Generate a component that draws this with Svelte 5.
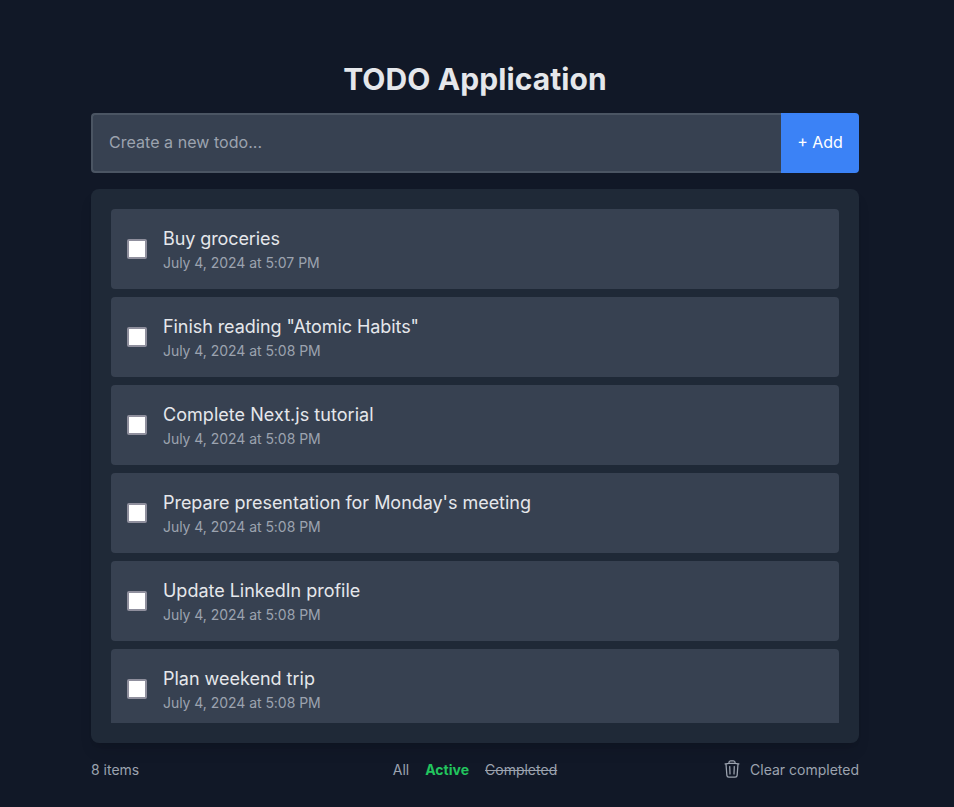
<script>
  const todos = [
    { title: 'Buy groceries', date: 'July 4, 2024 at 5:07 PM', tracking: -0.1 },
    { title: 'Finish reading "Atomic Habits"', date: 'July 4, 2024 at 5:08 PM', tracking: -0.07 },
    { title: 'Complete Next.js tutorial', date: 'July 4, 2024 at 5:08 PM', tracking: 0.04 },
    { title: "Prepare presentation for Monday's meeting", date: 'July 4, 2024 at 5:08 PM', tracking: -0.035 },
    { title: 'Update LinkedIn profile', date: 'July 4, 2024 at 5:08 PM', tracking: -0.02 },
    { title: 'Plan weekend trip', date: 'July 4, 2024 at 5:08 PM', tracking: -0.01 }
  ];
</script>

<main>
  <div class="app">
    <h1>TODO Application</h1>
    <form class="create">
      <input type="text" placeholder="Create a new todo..." />
      <button type="button" class="add">+ Add</button>
    </form>
    <section class="panel">
      <ul>
        {#each todos as { title, date, tracking }}
          <li>
            <input type="checkbox" aria-label={title} />
            <div class="body">
              <span class="title" style="letter-spacing: {tracking}px">{title}</span>
              <span class="date">{date}</span>
            </div>
          </li>
        {/each}
      </ul>
    </section>
    <footer>
      <span class="count">8 items</span>
      <nav>
        <button type="button">All</button>
        <button type="button" class="active">Active</button>
        <button type="button" class="done">Completed</button>
      </nav>
      <button type="button" class="clear">
        <svg width="20" height="20" viewBox="0 0 24 24" fill="none" stroke="currentColor" stroke-width="1.5" stroke-linecap="round" stroke-linejoin="round">
          <path d="m14.74 9-.346 9m-4.788 0L9.26 9m9.968-3.21c.342.052.682.107 1.022.166m-1.022-.165L18.16 19.673a2.25 2.25 0 0 1-2.244 2.077H8.084a2.25 2.25 0 0 1-2.244-2.077L4.772 5.79m14.456 0a48.108 48.108 0 0 0-3.478-.397m-12 .562c.34-.059.68-.114 1.022-.165m0 0a48.11 48.11 0 0 1 3.478-.397m7.5 0v-.916c0-1.18-.91-2.164-2.09-2.201a51.964 51.964 0 0 0-3.32 0c-1.18.037-2.09 1.022-2.09 2.201v.916m7.5 0a48.667 48.667 0 0 0-7.5 0" />
        </svg>
        Clear completed
      </button>
    </footer>
  </div>
</main>

<style>
  :global(body) { background: #111827; }
  main, main * { box-sizing: border-box; }
  main {
    height: 807px;
    overflow: hidden;
    padding: 61px 95px 0 91px;
    font-family: Inter, sans-serif;
    background: #111827;
    color: #e5e7eb;
  }
  h1 { margin: 0 0 16px; font-size: 30px; line-height: 36px; font-weight: 700; letter-spacing: 0.1px; text-align: center; }
  button { border: 0; padding: 0; background: none; color: inherit; font: inherit; }
  .create { display: flex; height: 60px; margin-bottom: 16px; }
  .create input {
    flex: 1;
    min-width: 0;
    padding: 0 16px 2px;
    border: 2px solid #4b5563;
    border-right: 0;
    border-radius: 4px 0 0 4px;
    background: #374151;
    color: #e5e7eb;
    font: 16px/24px Inter, sans-serif;
    letter-spacing: 0.04px;
    outline: none;
  }
  .create input::placeholder { color: #9ca3af; opacity: 1; }
  .add { width: 78px; padding-bottom: 2px; border-radius: 0 4px 4px 0; background: #3b82f6; color: #fff; font-size: 16px; }
  .panel {
    height: 554px;
    padding: 20px;
    border-radius: 8px;
    background: #1f2937;
    box-shadow: 0 10px 15px -3px rgba(0, 0, 0, 0.1), 0 4px 6px -4px rgba(0, 0, 0, 0.1);
  }
  ul { height: 514px; margin: 0; padding: 0; overflow: hidden; list-style: none; }
  li {
    display: flex;
    align-items: center;
    gap: 16px;
    height: 80px;
    margin-bottom: 8px;
    padding: 16px;
    border-radius: 4px;
    background: #374151;
  }
  li input {
    appearance: none;
    width: 20px;
    height: 20px;
    margin: 0;
    border: 2px solid #8f8f9d;
    border-radius: 2px;
    background: #fff;
  }
  .body { display: flex; flex-direction: column; }
  .title { font-size: 18px; line-height: 28px; }
  .date { font-size: 14px; line-height: 20px; letter-spacing: -0.045px; color: #9ca3af; }
  footer {
    display: grid;
    grid-template-columns: 1fr auto 1fr;
    align-items: center;
    height: 22px;
    margin-top: 16px;
    font-size: 14px;
    line-height: 20px;
    color: #9ca3af;
  }
  nav { display: flex; gap: 16px; }
  .active { color: #22c55e; font-weight: 700; }
  .done { text-decoration: line-through; }
  .clear { display: flex; align-items: center; justify-self: end; gap: 8px; }
  .clear svg { margin-bottom: 2px; }
</style>
